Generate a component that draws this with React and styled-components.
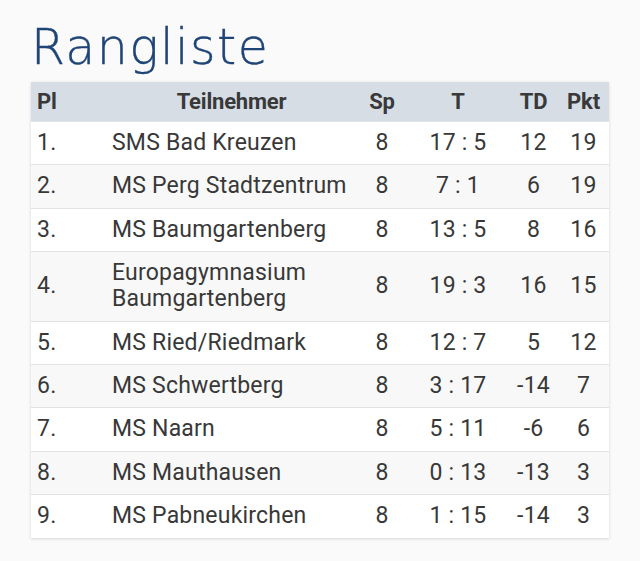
import React from 'react';
import styled, { createGlobalStyle } from 'styled-components';

const GlobalStyle = createGlobalStyle`
  body {
    margin: 0;
    background: #fafafa;
    font-family: Roboto, "Liberation Sans", sans-serif;
  }
`;

const Page = styled.div`
  padding: 18px 31px 22px 31px;
`;

const Title = styled.h1`
  margin: 0 0 4px 0;
  font-family: "DejaVu Sans", "Open Sans", sans-serif;
  font-weight: 300;
  font-size: 49px;
  line-height: 60px;
  letter-spacing: 1.4px;
  color: #1f4476;
  -webkit-text-stroke: 0.4px #1f4476;
`;

const Table = styled.table`
  width: 578px;
  border-collapse: collapse;
  table-layout: fixed;
  background: #fff;
  box-shadow: 0 1px 3px rgba(0, 0, 0, 0.15);
  font-size: 23px;
  color: #383838;
`;

const Th = styled.th`
  background: #d6dde5;
  font-weight: 700;
  font-size: 22px;
  line-height: 23px;
  padding: 8px 6px;
  text-align: ${p => p.$align || 'center'};
  color: #393939;
  letter-spacing: -0.2px;
`;

const Row = styled.tr`
  background: ${p => (p.$alt ? '#f8f8f8' : '#fff')};
  border-top: 1px solid #e2e2e2;
`;

const Td = styled.td`
  padding: 8px 6px 8.4px;
  line-height: 26px;
  vertical-align: middle;
  text-align: ${p => p.$align || 'center'};
  letter-spacing: 0.2px;
`;

const rows = [
  ['1.', 'SMS Bad Kreuzen', 8, '17 : 5', 12, 19],
  ['2.', 'MS Perg Stadtzentrum', 8, '7 : 1', 6, 19],
  ['3.', 'MS Baumgartenberg', 8, '13 : 5', 8, 16],
  ['4.', 'Europagymnasium Baumgartenberg', 8, '19 : 3', 16, 15],
  ['5.', 'MS Ried/Riedmark', 8, '12 : 7', 5, 12],
  ['6.', 'MS Schwertberg', 8, '3 : 17', -14, 7],
  ['7.', 'MS Naarn', 8, '5 : 11', -6, 6],
  ['8.', 'MS Mauthausen', 8, '0 : 13', -13, 3],
  ['9.', 'MS Pabneukirchen', 8, '1 : 15', -14, 3],
];

const App = () => (
  <Page>
    <GlobalStyle />
    <Title>Rangliste</Title>
    <Table>
      <colgroup>
        <col style={{ width: 75 }} />
        <col style={{ width: 251 }} />
        <col style={{ width: 50 }} />
        <col style={{ width: 102 }} />
        <col style={{ width: 49 }} />
        <col style={{ width: 51 }} />
      </colgroup>
      <thead>
        <tr>
          <Th $align="left">Pl</Th>
          <Th>Teilnehmer</Th>
          <Th>Sp</Th>
          <Th>T</Th>
          <Th>TD</Th>
          <Th>Pkt</Th>
        </tr>
      </thead>
      <tbody>
        {rows.map((r, i) => (
          <Row key={r[0]} $alt={i % 2 === 1}>
            <Td $align="left">{r[0]}</Td>
            <Td $align="left">{r[1]}</Td>
            <Td>{r[2]}</Td>
            <Td>{r[3]}</Td>
            <Td>{r[4]}</Td>
            <Td>{r[5]}</Td>
          </Row>
        ))}
      </tbody>
    </Table>
  </Page>
);

export default App;
